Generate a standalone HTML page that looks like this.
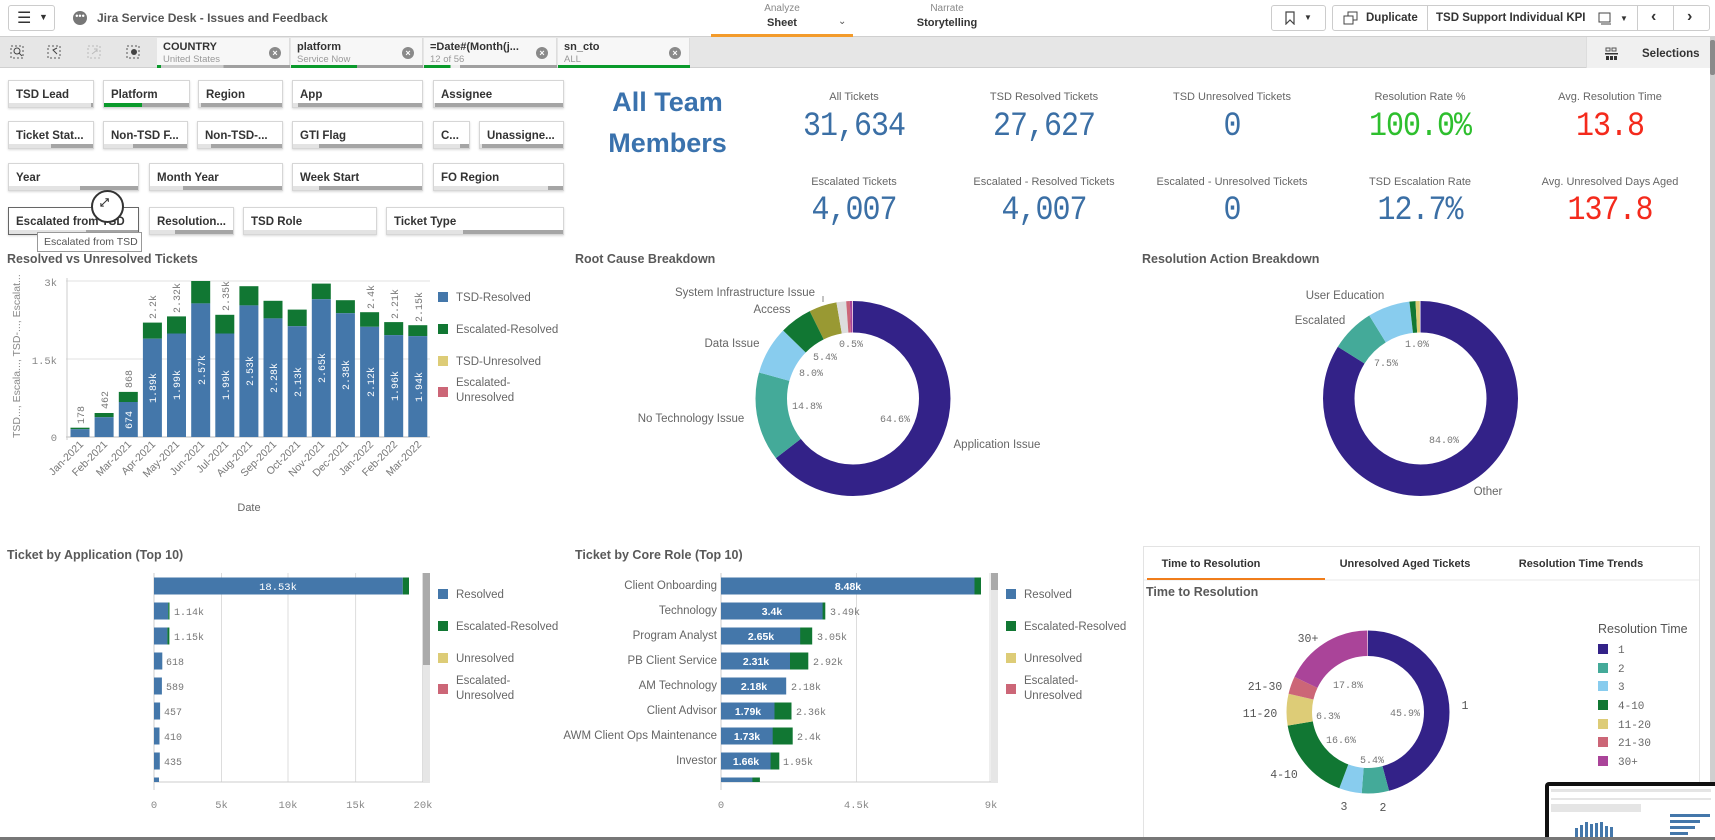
<!DOCTYPE html>
<html><head><meta charset="utf-8"><style>
*{box-sizing:border-box;margin:0;padding:0}
body{width:1715px;height:840px;overflow:hidden;background:#fff;font-family:"Liberation Sans",sans-serif;position:relative;color:#404040}
.a{position:absolute}
.fb{position:absolute;height:28px;border:1px solid #d6d6d6;box-shadow:0 1px 2px rgba(0,0,0,.15);background:#fff;font-size:11.5px;font-weight:bold;color:#333;padding:8px 0 0 7px;white-space:nowrap;overflow:hidden}
.fb i{position:absolute;left:0;right:0;bottom:0;height:4px;background:#a5a5a5}
.fb b{position:absolute;left:0;bottom:0;height:4px;background:#e3e3e3}
.pill{position:absolute;top:38px;height:30px;background:#f7f7f7;border-right:1px solid #ddd;padding:3px 0 0 6px}
.pill .t{font-size:11px;font-weight:bold;color:#333}
.pill .s{font-size:9.5px;color:#999;margin-top:1px}
.pill .x{position:absolute;right:8px;top:9px;width:12px;height:12px;border-radius:50%;background:#8a8a8a;color:#fff;font-size:9px;line-height:12px;text-align:center;font-weight:bold}
.pill .g{position:absolute;bottom:0;left:0;height:3px}
.kl{position:absolute;width:200px;text-align:center;font-size:11px;color:#666}
.kv{position:absolute;width:200px;text-align:center;font-family:"Liberation Mono",monospace;font-size:30px;letter-spacing:-1px;transform:scaleY(1.15)}
.btn{position:absolute;top:5px;height:26px;border:1px solid #ccc;border-radius:3px;background:#fff;font-size:11.5px;font-weight:bold;color:#333}
</style></head><body>
<div class="a" style="left:0;top:0;width:1715px;height:37px;border-bottom:1px solid #cfcfcf;background:#fff"></div>
<div class="btn" style="left:8px;width:47px;"><span class="a" style="left:8px;top:2px;font-size:16px;font-weight:normal">☰</span><span class="a" style="left:30px;top:6px;font-size:9px">▼</span></div>
<div class="a" style="left:73px;top:11px;width:14px;height:14px;border-radius:50%;background:#777;color:#fff;font-size:9px;line-height:10px;text-align:center">•••</div>
<div class="a" style="left:97px;top:11px;font-size:12px;font-weight:bold;color:#555">Jira Service Desk - Issues and Feedback</div>
<div class="a" style="left:711px;top:3px;width:142px;text-align:center;font-size:10px;color:#888">Analyze</div>
<div class="a" style="left:711px;top:17px;width:142px;text-align:center;font-size:11px;font-weight:bold;color:#333">Sheet</div>
<div class="a" style="left:838px;top:16px;font-size:10px;color:#555">⌄</div>
<div class="a" style="left:711px;top:34px;width:142px;height:3px;background:#f39b2b"></div>
<div class="a" style="left:876px;top:3px;width:142px;text-align:center;font-size:10px;color:#888">Narrate</div>
<div class="a" style="left:876px;top:17px;width:142px;text-align:center;font-size:11px;font-weight:bold;color:#333">Storytelling</div>
<div class="btn" style="left:1271px;width:55px"><svg class="a" style="left:13px;top:5px" width="10" height="14"><path d="M1 1H9V13L5 9L1 13Z" fill="none" stroke="#444" stroke-width="1.2"/></svg><span class="a" style="left:32px;top:7px;font-size:8px">▼</span></div>
<div class="btn" style="left:1332px;width:378px">
<svg class="a" style="left:10px;top:5px" width="16" height="14"><rect x="5" y="1" width="9" height="8" fill="none" stroke="#444"/><rect x="1" y="5" width="9" height="8" fill="#fff" stroke="#444"/></svg>
<span class="a" style="left:33px;top:6px">Duplicate</span>
<span class="a" style="left:94px;top:0;width:1px;height:24px;background:#ccc"></span>
<span class="a" style="left:103px;top:6px">TSD Support Individual KPI</span>
<svg class="a" style="left:265px;top:6px" width="14" height="13"><rect x="1" y="1" width="11" height="9" fill="none" stroke="#444"/><path d="M3 12H13" stroke="#444"/></svg>
<span class="a" style="left:287px;top:8px;font-size:8px">▼</span>
<span class="a" style="left:304px;top:0;width:1px;height:24px;background:#ccc"></span>
<span class="a" style="left:318px;top:2px;font-size:16px">‹</span>
<span class="a" style="left:340px;top:0;width:1px;height:24px;background:#ccc"></span>
<span class="a" style="left:354px;top:2px;font-size:16px">›</span>
</div>
<div class="a" style="left:0;top:37px;width:1715px;height:31px;background:#e6e6e6;border-bottom:1px solid #d0d0d0"></div>
<svg class="a" style="left:0;top:37px" width="157" height="31">
<g fill="none" stroke="#555" stroke-width="1" stroke-dasharray="2 2"><rect x="11" y="9" width="12" height="12"/><rect x="48" y="9" width="12" height="12"/><rect x="88" y="9" width="12" height="12" stroke="#bbb"/><rect x="127" y="9" width="12" height="12"/></g>
<circle cx="17" cy="14" r="3" fill="none" stroke="#444"/><path d="M19 16L22 19" stroke="#444"/>
<path d="M57 17L53 13L57 11" fill="none" stroke="#444"/><path d="M92 17L97 13M94 12H97V15" fill="none" stroke="#bbb"/>
<circle cx="134" cy="15" r="3" fill="#444"/></svg>
<div class="pill" style="left:157px;width:133px"><div class="t">COUNTRY</div><div class="s">United States</div><div class="x">×</div><div class="g" style="width:133px;background:linear-gradient(90deg,#0a9a2b 0 4px,#ccc 4px 50%,#a0a0a0 50%)"></div></div>
<div class="pill" style="left:291px;width:132px"><div class="t">platform</div><div class="s">Service Now</div><div class="x">×</div><div class="g" style="width:132px;background:linear-gradient(90deg,#0a9a2b 0 50%,#a0a0a0 50%)"></div></div>
<div class="pill" style="left:424px;width:133px"><div class="t">=Date#(Month(j...</div><div class="s">12 of 56</div><div class="x">×</div><div class="g" style="width:133px;background:linear-gradient(90deg,#0a9a2b 0 20%,#eee 20% 27%,#a0a0a0 27%)"></div></div>
<div class="pill" style="left:558px;width:132px"><div class="t">sn_cto</div><div class="s">ALL</div><div class="x">×</div><div class="g" style="width:132px;background:#0a9a2b"></div></div>
<div class="a" style="left:1586px;top:37px;width:124px;height:31px;background:#f0f0f0;border-left:1px solid #ddd"></div>
<svg class="a" style="left:1605px;top:47px" width="14" height="13"><rect x="1" y="1" width="4" height="3" fill="none" stroke="#555"/><rect x="7" y="1" width="4" height="3" fill="none" stroke="#555"/><rect x="0" y="6" width="13" height="1.5" fill="#333"/><rect x="1" y="9" width="3" height="4" fill="#333"/><rect x="5" y="9" width="3" height="4" fill="#333"/><rect x="9" y="9" width="3" height="4" fill="#333"/></svg>
<div class="a" style="left:1642px;top:48px;font-size:11.5px;font-weight:bold;color:#333">Selections</div>
<div class="a" style="left:1710px;top:37px;width:5px;height:803px;background:#cfcfcf"></div>
<div class="a" style="left:1710px;top:40px;width:5px;height:35px;background:#8a8a8a;border-radius:2px"></div>
<div class="fb" style="left:8px;top:80px;width:86px">TSD Lead<i></i><b style="width:98%"></b></div>
<div class="fb" style="left:103px;top:80px;width:87px">Platform<i></i><b style="width:45%;background:#0a9a2b"></b></div>
<div class="fb" style="left:198px;top:80px;width:85px">Region<i></i><b style="width:2%"></b></div>
<div class="fb" style="left:292px;top:80px;width:131px">App<i></i><b style="width:4%"></b></div>
<div class="fb" style="left:433px;top:80px;width:131px">Assignee<i></i><b style="width:1%"></b></div>
<div class="fb" style="left:8px;top:121px;width:86px">Ticket Stat...<i></i><b style="width:50%"></b></div>
<div class="fb" style="left:103px;top:121px;width:85px">Non-TSD F...<i></i><b style="width:35%"></b></div>
<div class="fb" style="left:197px;top:121px;width:86px">Non-TSD-...<i></i><b style="width:15%"></b></div>
<div class="fb" style="left:292px;top:121px;width:131px">GTI Flag<i></i><b style="width:20%"></b></div>
<div class="fb" style="left:433px;top:121px;width:37px">C...<i></i><b style="width:75%"></b></div>
<div class="fb" style="left:479px;top:121px;width:85px">Unassigne...<i></i><b style="width:2%"></b></div>
<div class="fb" style="left:8px;top:163px;width:131px">Year<i></i><b style="width:55%"></b></div>
<div class="fb" style="left:149px;top:163px;width:134px">Month Year<i></i><b style="width:25%"></b></div>
<div class="fb" style="left:292px;top:163px;width:131px">Week Start<i></i><b style="width:20%"></b></div>
<div class="fb" style="left:433px;top:163px;width:131px">FO Region<i></i><b style="width:88%"></b></div>
<div class="fb" style="left:8px;top:207px;width:131px;border-color:#666">Escalated from TSD<i></i><b style="width:60%"></b></div>
<div class="fb" style="left:149px;top:207px;width:85px">Resolution...<i></i><b style="width:30%"></b></div>
<div class="fb" style="left:243px;top:207px;width:134px">TSD Role<i></i><b style="width:100%"></b></div>
<div class="fb" style="left:386px;top:207px;width:178px">Ticket Type<i></i><b style="width:43%"></b></div>
<div class="a" style="left:91px;top:190px;width:33px;height:33px;border-radius:50%;border:2px solid #333;background:#fff"></div>
<div class="a" style="left:100px;top:197px;font-size:11px;font-weight:bold;color:#333">⤢</div>
<div class="a" style="left:37px;top:232px;width:105px;height:20px;border:1px solid #999;background:#fff;font-size:10.5px;color:#555;padding:3px 0 0 6px">Escalated from TSD</div>
<div class="a" style="left:580px;top:82px;width:175px;text-align:center;font-size:27px;font-weight:bold;color:#3a72ad;line-height:41px">All Team<br>Members</div>
<div class="kl" style="left:754px;top:91px">All Tickets</div><div class="kv" style="left:754px;top:110px;color:#3b6fa5">31,634</div>
<div class="kl" style="left:944px;top:91px">TSD Resolved Tickets</div><div class="kv" style="left:944px;top:110px;color:#3b6fa5">27,627</div>
<div class="kl" style="left:1132px;top:91px">TSD Unresolved Tickets</div><div class="kv" style="left:1132px;top:110px;color:#3b6fa5">0</div>
<div class="kl" style="left:1320px;top:91px">Resolution Rate %</div><div class="kv" style="left:1320px;top:110px;color:#2ebf2e">100.0%</div>
<div class="kl" style="left:1510px;top:91px">Avg. Resolution Time</div><div class="kv" style="left:1510px;top:110px;color:#f42a1c">13.8</div>
<div class="kl" style="left:754px;top:176px">Escalated Tickets</div><div class="kv" style="left:754px;top:194px;color:#3b6fa5">4,007</div>
<div class="kl" style="left:944px;top:176px">Escalated - Resolved Tickets</div><div class="kv" style="left:944px;top:194px;color:#3b6fa5">4,007</div>
<div class="kl" style="left:1132px;top:176px">Escalated - Unresolved Tickets</div><div class="kv" style="left:1132px;top:194px;color:#3b6fa5">0</div>
<div class="kl" style="left:1320px;top:176px">TSD Escalation Rate</div><div class="kv" style="left:1320px;top:194px;color:#3b6fa5">12.7%</div>
<div class="kl" style="left:1510px;top:176px">Avg. Unresolved Days Aged</div><div class="kv" style="left:1510px;top:194px;color:#f42a1c">137.8</div>

<svg class="a" style="left:0;top:0" width="1715" height="840" font-family="Liberation Sans, sans-serif">
<g font-size="12.5" font-weight="bold" fill="#595959">
<text x="7" y="263">Resolved vs Unresolved Tickets</text>
<text x="575" y="263">Root Cause Breakdown</text>
<text x="1142" y="263">Resolution Action Breakdown</text>
<text x="7" y="559">Ticket by Application (Top 10)</text>
<text x="575" y="559">Ticket by Core Role (Top 10)</text>
</g>
<g stroke="#e0e0e0"><line x1="66" y1="281" x2="430" y2="281"/><line x1="66" y1="359" x2="430" y2="359"/></g>
<line x1="66" y1="437" x2="430" y2="437" stroke="#bbb"/><line x1="67" y1="278" x2="67" y2="440" stroke="#ccc"/>
<g font-size="10.5" fill="#888" text-anchor="end" font-family="Liberation Mono, monospace"><text x="57" y="286">3k</text><text x="57" y="364">1.5k</text><text x="57" y="441">0</text></g>
<text transform="translate(20,438) rotate(-90)" font-size="10.5" fill="#888">TSD..., Escala..., TSD-..., Escalat...</text>
<g fill="#117733">
<rect x="70.5" y="427.7" width="19" height="1.5"/><rect x="94.6" y="413" width="19" height="4.2"/><rect x="118.8" y="391.9" width="19" height="10.1"/><rect x="142.9" y="322.6" width="19" height="16.1"/><rect x="167" y="316.4" width="19" height="17.1"/><rect x="191.2" y="281" width="19" height="22.4"/><rect x="215.3" y="314.8" width="19" height="18.7"/><rect x="239.4" y="286.2" width="19" height="19.2"/><rect x="263.5" y="300.8" width="19" height="17.6"/><rect x="287.7" y="309.6" width="19" height="16.6"/><rect x="311.8" y="283.6" width="19" height="15.6"/><rect x="335.9" y="300.2" width="19" height="13"/><rect x="360.1" y="312.2" width="19" height="14.6"/><rect x="384.2" y="322.1" width="19" height="13"/><rect x="408.3" y="325.2" width="19" height="10.9"/></g>
<g fill="#4477aa">
<rect x="70.5" y="429.2" width="19" height="7.8"/><rect x="94.6" y="417.2" width="19" height="19.8"/><rect x="118.8" y="402" width="19" height="35"/><rect x="142.9" y="338.7" width="19" height="98.3"/><rect x="167" y="333.5" width="19" height="103.5"/><rect x="191.2" y="303.4" width="19" height="133.6"/><rect x="215.3" y="333.5" width="19" height="103.5"/><rect x="239.4" y="305.4" width="19" height="131.6"/><rect x="263.5" y="318.4" width="19" height="118.6"/><rect x="287.7" y="326.2" width="19" height="110.8"/><rect x="311.8" y="299.2" width="19" height="137.8"/><rect x="335.9" y="313.2" width="19" height="123.8"/><rect x="360.1" y="326.8" width="19" height="110.2"/><rect x="384.2" y="335.1" width="19" height="101.9"/><rect x="408.3" y="336.1" width="19" height="100.9"/></g>
<g font-size="10" fill="#777" font-family="Liberation Mono, monospace">
<text transform="translate(84,424) rotate(-90)">178</text><text transform="translate(108,409) rotate(-90)">462</text><text transform="translate(132,388) rotate(-90)">868</text><text transform="translate(156,319) rotate(-90)">2.2k</text><text transform="translate(180,313) rotate(-90)">2.32k</text><text transform="translate(229,311) rotate(-90)">2.35k</text><text transform="translate(374,309) rotate(-90)">2.4k</text><text transform="translate(398,319) rotate(-90)">2.21k</text><text transform="translate(422,322) rotate(-90)">2.15k</text></g>
<g font-size="10" fill="#fff" text-anchor="middle" font-family="Liberation Mono, monospace">
<text transform="translate(132,420) rotate(-90)">674</text><text transform="translate(156,388) rotate(-90)">1.89k</text><text transform="translate(180,385) rotate(-90)">1.99k</text><text transform="translate(205,370) rotate(-90)">2.57k</text><text transform="translate(229,385) rotate(-90)">1.99k</text><text transform="translate(253,371) rotate(-90)">2.53k</text><text transform="translate(277,378) rotate(-90)">2.28k</text><text transform="translate(301,382) rotate(-90)">2.13k</text><text transform="translate(325,368) rotate(-90)">2.65k</text><text transform="translate(349,375) rotate(-90)">2.38k</text><text transform="translate(374,382) rotate(-90)">2.12k</text><text transform="translate(398,386) rotate(-90)">1.96k</text><text transform="translate(422,387) rotate(-90)">1.94k</text></g>
<g font-size="10.5" fill="#777" text-anchor="end">
<text transform="translate(84,445) rotate(-45)">Jan-2021</text><text transform="translate(108,445) rotate(-45)">Feb-2021</text><text transform="translate(132,445) rotate(-45)">Mar-2021</text><text transform="translate(156,445) rotate(-45)">Apr-2021</text><text transform="translate(180,445) rotate(-45)">May-2021</text><text transform="translate(205,445) rotate(-45)">Jun-2021</text><text transform="translate(229,445) rotate(-45)">Jul-2021</text><text transform="translate(253,445) rotate(-45)">Aug-2021</text><text transform="translate(277,445) rotate(-45)">Sep-2021</text><text transform="translate(301,445) rotate(-45)">Oct-2021</text><text transform="translate(325,445) rotate(-45)">Nov-2021</text><text transform="translate(349,445) rotate(-45)">Dec-2021</text><text transform="translate(374,445) rotate(-45)">Jan-2022</text><text transform="translate(398,445) rotate(-45)">Feb-2022</text><text transform="translate(422,445) rotate(-45)">Mar-2022</text></g>
<text x="249" y="511" font-size="11" fill="#666" text-anchor="middle">Date</text>
<g font-size="11.5" fill="#666">
<rect x="438" y="292" width="10" height="10" fill="#4477aa"/><text x="456" y="301">TSD-Resolved</text>
<rect x="438" y="324" width="10" height="10" fill="#117733"/><text x="456" y="333">Escalated-Resolved</text>
<rect x="438" y="356" width="10" height="10" fill="#ddcc77"/><text x="456" y="365">TSD-Unresolved</text>
<rect x="438" y="387" width="10" height="10" fill="#cc6677"/><text x="456" y="386">Escalated-</text><text x="456" y="401">Unresolved</text></g>
<g transform="rotate(-90 853 398.5)" fill="none" stroke-width="31.5">
<circle cx="853" cy="398.5" r="81.75" pathLength="100" stroke="#332288" stroke-dasharray="64.6 100"/>
<circle cx="853" cy="398.5" r="81.75" pathLength="100" stroke="#44aa99" stroke-dasharray="14.8 100" stroke-dashoffset="-64.6"/>
<circle cx="853" cy="398.5" r="81.75" pathLength="100" stroke="#88ccee" stroke-dasharray="8 100" stroke-dashoffset="-79.4"/>
<circle cx="853" cy="398.5" r="81.75" pathLength="100" stroke="#117733" stroke-dasharray="5.4 100" stroke-dashoffset="-87.4"/>
<circle cx="853" cy="398.5" r="81.75" pathLength="100" stroke="#999933" stroke-dasharray="4.6 100" stroke-dashoffset="-92.8"/>
<circle cx="853" cy="398.5" r="81.75" pathLength="100" stroke="#dddddd" stroke-dasharray="1.6 100" stroke-dashoffset="-97.4"/>
<circle cx="853" cy="398.5" r="81.75" pathLength="100" stroke="#cc6677" stroke-dasharray="0.6 100" stroke-dashoffset="-99"/>
<circle cx="853" cy="398.5" r="81.75" pathLength="100" stroke="#aa4499" stroke-dasharray="0.4 100" stroke-dashoffset="-99.6"/></g>
<g font-size="11.5" fill="#666" text-anchor="middle">
<text x="745" y="296">System Infrastructure Issue</text><text x="772" y="313">Access</text><text x="732" y="347">Data Issue</text><text x="691" y="422">No Technology Issue</text><text x="997" y="448">Application Issue</text></g>
<line x1="823" y1="296" x2="823" y2="302" stroke="#888"/>
<g font-size="10" fill="#777" text-anchor="middle" font-family="Liberation Mono, monospace">
<text x="851" y="347">0.5%</text><text x="825" y="360">5.4%</text><text x="811" y="376">8.0%</text><text x="807" y="409">14.8%</text><text x="895" y="422">64.6%</text></g>
<g transform="rotate(-90 1420.5 398.5)" fill="none" stroke-width="31.5">
<circle cx="1420.5" cy="398.5" r="81.75" pathLength="100" stroke="#332288" stroke-dasharray="84 100"/>
<circle cx="1420.5" cy="398.5" r="81.75" pathLength="100" stroke="#44aa99" stroke-dasharray="7.3 100" stroke-dashoffset="-84"/>
<circle cx="1420.5" cy="398.5" r="81.75" pathLength="100" stroke="#88ccee" stroke-dasharray="7 100" stroke-dashoffset="-91.3"/>
<circle cx="1420.5" cy="398.5" r="81.75" pathLength="100" stroke="#117733" stroke-dasharray="1 100" stroke-dashoffset="-98.3"/>
<circle cx="1420.5" cy="398.5" r="81.75" pathLength="100" stroke="#ddcc77" stroke-dasharray="0.7 100" stroke-dashoffset="-99.3"/></g>
<g font-size="11.5" fill="#666" text-anchor="middle"><text x="1345" y="299">User Education</text><text x="1320" y="324">Escalated</text><text x="1488" y="495">Other</text></g>
<g font-size="10" fill="#777" text-anchor="middle" font-family="Liberation Mono, monospace"><text x="1417" y="347">1.0%</text><text x="1386" y="366">7.5%</text><text x="1444" y="443">84.0%</text></g>
<g stroke="#ddd"><line x1="221.5" y1="573" x2="221.5" y2="782"/><line x1="288" y1="573" x2="288" y2="782"/><line x1="355.6" y1="573" x2="355.6" y2="782"/><line x1="422.5" y1="573" x2="422.5" y2="782"/></g>
<line x1="154" y1="573" x2="154" y2="790" stroke="#ccc"/><line x1="154" y1="782" x2="430" y2="782" stroke="#ccc"/>
<rect x="423" y="573" width="7" height="209" fill="#e6e6e6"/><rect x="423" y="573" width="7" height="92" fill="#aaa"/>
<g fill="#4477aa"><rect x="154" y="577.5" width="248.8" height="17"/><rect x="154" y="602.5" width="14.2" height="17"/><rect x="154" y="627.5" width="13.4" height="17"/><rect x="154" y="652.5" width="8.3" height="17"/><rect x="154" y="677.5" width="7.9" height="17"/><rect x="154" y="702.5" width="6.1" height="17"/><rect x="154" y="727.5" width="5.5" height="17"/><rect x="154" y="752.5" width="5.8" height="17"/><rect x="154" y="777.5" width="5" height="4.5"/></g>
<g fill="#117733"><rect x="402.8" y="577.5" width="6.2" height="17"/><rect x="168.2" y="602.5" width="1.3" height="17"/><rect x="167.4" y="627.5" width="2" height="17"/></g>
<text x="278" y="590" font-size="10.5" fill="#fff" text-anchor="middle" font-family="Liberation Mono, monospace">18.53k</text>
<g font-size="10" fill="#777" font-family="Liberation Mono, monospace"><text x="174" y="615">1.14k</text><text x="174" y="640">1.15k</text><text x="166" y="665">618</text><text x="166" y="690">589</text><text x="164" y="715">457</text><text x="164" y="740">410</text><text x="164" y="765">435</text></g>
<g font-size="10.5" fill="#888" text-anchor="middle" font-family="Liberation Mono, monospace"><text x="154" y="808">0</text><text x="221.5" y="808">5k</text><text x="288" y="808">10k</text><text x="355.6" y="808">15k</text><text x="423" y="808">20k</text></g>
<g font-size="11.5" fill="#666">
<rect x="438" y="589" width="10" height="10" fill="#4477aa"/><text x="456" y="598">Resolved</text>
<rect x="438" y="621" width="10" height="10" fill="#117733"/><text x="456" y="630">Escalated-Resolved</text>
<rect x="438" y="653" width="10" height="10" fill="#ddcc77"/><text x="456" y="662">Unresolved</text>
<rect x="438" y="684" width="10" height="10" fill="#cc6677"/><text x="456" y="684">Escalated-</text><text x="456" y="699">Unresolved</text></g>
<line x1="856.5" y1="573" x2="856.5" y2="782" stroke="#ddd"/><line x1="990" y1="573" x2="990" y2="782" stroke="#ddd"/>
<line x1="721" y1="573" x2="721" y2="790" stroke="#ccc"/><line x1="721" y1="782" x2="998" y2="782" stroke="#ccc"/>
<rect x="991" y="573" width="7" height="209" fill="#e6e6e6"/><rect x="991" y="573" width="7" height="17" fill="#aaa"/>
<g fill="#117733"><rect x="721" y="577.5" width="260" height="17"/><rect x="721" y="602.5" width="104.3" height="17"/><rect x="721" y="627.5" width="91.2" height="17"/><rect x="721" y="652.5" width="87.3" height="17"/><rect x="721" y="702.5" width="70.5" height="17"/><rect x="721" y="727.5" width="71.7" height="17"/><rect x="721" y="752.5" width="58.3" height="17"/><rect x="721" y="777.5" width="38.9" height="4.5"/></g>
<g fill="#4477aa"><rect x="721" y="577.5" width="253.5" height="17"/><rect x="721" y="602.5" width="101.6" height="17"/><rect x="721" y="627.5" width="79.2" height="17"/><rect x="721" y="652.5" width="69" height="17"/><rect x="721" y="677.5" width="65.2" height="17"/><rect x="721" y="702.5" width="53.5" height="17"/><rect x="721" y="727.5" width="51.7" height="17"/><rect x="721" y="752.5" width="49.6" height="17"/><rect x="721" y="777.5" width="31.4" height="4.5"/></g>
<g font-size="10.5" fill="#fff" text-anchor="middle" font-weight="bold"><text x="848" y="590">8.48k</text><text x="772" y="615">3.4k</text><text x="761" y="640">2.65k</text><text x="756" y="665">2.31k</text><text x="754" y="690">2.18k</text><text x="748" y="715">1.79k</text><text x="747" y="740">1.73k</text><text x="746" y="765">1.66k</text></g>
<g font-size="10" fill="#777" font-family="Liberation Mono, monospace"><text x="830" y="615">3.49k</text><text x="817" y="640">3.05k</text><text x="813" y="665">2.92k</text><text x="791" y="690">2.18k</text><text x="796" y="715">2.36k</text><text x="797" y="740">2.4k</text><text x="783" y="765">1.95k</text></g>
<g font-size="11.5" fill="#666" text-anchor="end"><text x="717" y="589">Client Onboarding</text><text x="717" y="614">Technology</text><text x="717" y="639">Program Analyst</text><text x="717" y="664">PB Client Service</text><text x="717" y="689">AM Technology</text><text x="717" y="714">Client Advisor</text><text x="717" y="739">AWM Client Ops Maintenance</text><text x="717" y="764">Investor</text></g>
<g font-size="10.5" fill="#888" text-anchor="middle" font-family="Liberation Mono, monospace"><text x="721" y="808">0</text><text x="856.5" y="808">4.5k</text><text x="991" y="808">9k</text></g>
<g font-size="11.5" fill="#666">
<rect x="1006" y="589" width="10" height="10" fill="#4477aa"/><text x="1024" y="598">Resolved</text>
<rect x="1006" y="621" width="10" height="10" fill="#117733"/><text x="1024" y="630">Escalated-Resolved</text>
<rect x="1006" y="653" width="10" height="10" fill="#ddcc77"/><text x="1024" y="662">Unresolved</text>
<rect x="1006" y="684" width="10" height="10" fill="#cc6677"/><text x="1024" y="684">Escalated-</text><text x="1024" y="699">Unresolved</text></g>
<rect x="1143.5" y="546.5" width="556" height="291" fill="none" stroke="#e3e3e3"/>
<line x1="1144" y1="580" x2="1699" y2="580" stroke="#e8e8e8"/>
<rect x="1147" y="578" width="178" height="2" fill="#f07d1b"/>
<g font-size="11" font-weight="bold" fill="#333" text-anchor="middle"><text x="1211" y="567">Time to Resolution</text><text x="1405" y="567">Unresolved Aged Tickets</text><text x="1581" y="567">Resolution Time Trends</text></g>
<text x="1146" y="596" font-size="12.5" font-weight="bold" fill="#595959">Time to Resolution</text>
<g transform="rotate(-90 1368 712)" fill="none" stroke-width="25.5">
<circle cx="1368" cy="712" r="68.75" pathLength="100" stroke="#332288" stroke-dasharray="45.9 100"/>
<circle cx="1368" cy="712" r="68.75" pathLength="100" stroke="#44aa99" stroke-dasharray="5.4 100" stroke-dashoffset="-45.9"/>
<circle cx="1368" cy="712" r="68.75" pathLength="100" stroke="#88ccee" stroke-dasharray="4.5 100" stroke-dashoffset="-51.3"/>
<circle cx="1368" cy="712" r="68.75" pathLength="100" stroke="#117733" stroke-dasharray="16.6 100" stroke-dashoffset="-55.8"/>
<circle cx="1368" cy="712" r="68.75" pathLength="100" stroke="#ddcc77" stroke-dasharray="6.3 100" stroke-dashoffset="-72.4"/>
<circle cx="1368" cy="712" r="68.75" pathLength="100" stroke="#cc6677" stroke-dasharray="3.5 100" stroke-dashoffset="-78.7"/>
<circle cx="1368" cy="712" r="68.75" pathLength="100" stroke="#aa4499" stroke-dasharray="17.8 100" stroke-dashoffset="-82.2"/></g>
<g font-size="11.5" fill="#555" text-anchor="middle" font-family="Liberation Mono, monospace"><text x="1308" y="642">30+</text><text x="1265" y="690">21-30</text><text x="1260" y="717">11-20</text><text x="1284" y="778">4-10</text><text x="1344" y="810">3</text><text x="1383" y="811">2</text><text x="1465" y="709">1</text></g>
<g font-size="10" fill="#777" text-anchor="middle" font-family="Liberation Mono, monospace"><text x="1348" y="688">17.8%</text><text x="1328" y="719">6.3%</text><text x="1341" y="743">16.6%</text><text x="1372" y="763">5.4%</text><text x="1405" y="716">45.9%</text></g>
<text x="1598" y="633" font-size="12.5" fill="#555">Resolution Time</text>
<g font-size="11" fill="#666" font-family="Liberation Mono, monospace">
<rect x="1598" y="644" width="10" height="10" fill="#332288"/><text x="1618" y="653">1</text>
<rect x="1598" y="663" width="10" height="10" fill="#44aa99"/><text x="1618" y="672">2</text>
<rect x="1598" y="681" width="10" height="10" fill="#88ccee"/><text x="1618" y="690">3</text>
<rect x="1598" y="700" width="10" height="10" fill="#117733"/><text x="1618" y="709">4-10</text>
<rect x="1598" y="719" width="10" height="10" fill="#ddcc77"/><text x="1618" y="728">11-20</text>
<rect x="1598" y="737" width="10" height="10" fill="#cc6677"/><text x="1618" y="746">21-30</text>
<rect x="1598" y="756" width="10" height="10" fill="#aa4499"/><text x="1618" y="765">30+</text></g>
<rect x="1545" y="782" width="175" height="60" fill="#111" rx="4"/>
<rect x="1549" y="786" width="170" height="56" fill="#fff"/>
<g fill="#e5e5e5"><rect x="1551" y="789" width="160" height="3"/><rect x="1551" y="798" width="160" height="2"/><rect x="1551" y="804" width="90" height="8"/></g>
<g fill="#4477aa"><rect x="1575" y="828" width="3" height="12"/><rect x="1580" y="825" width="3" height="15"/><rect x="1585" y="822" width="3" height="18"/><rect x="1590" y="824" width="3" height="16"/><rect x="1595" y="823" width="3" height="17"/><rect x="1600" y="822" width="3" height="18"/><rect x="1605" y="826" width="3" height="14"/><rect x="1610" y="827" width="3" height="13"/><rect x="1670" y="814" width="40" height="3"/><rect x="1670" y="820" width="30" height="3"/><rect x="1670" y="826" width="25" height="3"/><rect x="1670" y="832" width="18" height="3"/></g>
<rect x="0" y="837" width="1715" height="3" fill="#777"/>
</svg>
</body></html>
